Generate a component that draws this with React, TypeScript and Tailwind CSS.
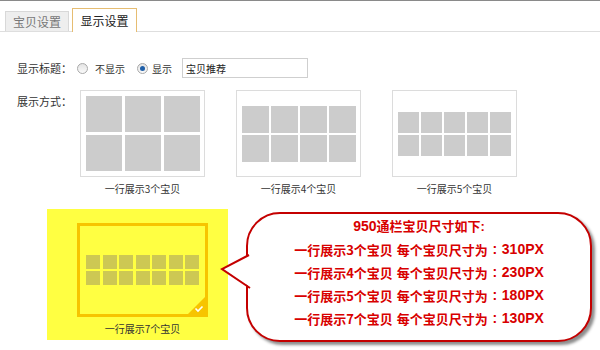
import React from "react";

const font = { fontFamily: '"Noto Sans CJK SC", "Liberation Sans", sans-serif' };
const latin = { fontFamily: '"Liberation Sans", "Noto Sans CJK SC", sans-serif' };

function Cells({ cols, size, gap, color }: { cols: number; size: number; gap: number; color: string }) {
  const items = Array.from({ length: cols * 2 });
  return (
    <div
      className="grid"
      style={{ gridTemplateColumns: `repeat(${cols}, ${size}px)`, gridAutoRows: `${size}px`, gap: `${gap}px` }}
    >
      {items.map((_, i) => (
        <div key={i} style={{ background: color }} />
      ))}
    </div>
  );
}

function Layout({ cols, size, gap, caption }: { cols: number; size: number; gap: number; caption: string }) {
  return (
    <div className="flex w-[125px] flex-col items-center">
      <div className="flex h-[87px] w-[125px] items-center justify-center border border-[#dcdcdc] bg-white">
        <Cells cols={cols} size={size} gap={gap} color="#cccccc" />
      </div>
      <div className="mt-[5px] text-[10px] leading-[13px] text-[#333]">{caption}</div>
    </div>
  );
}

function Radio({ checked }: { checked?: boolean }) {
  return (
    <span className="relative inline-flex h-[11px] w-[11px] items-center justify-center rounded-full border border-[#a9a9a9] bg-gradient-to-b from-[#e4e4e4] to-[#fafafa]">
      {checked && <span className="h-[5px] w-[5px] rounded-full bg-[#1f5fa8]" />}
    </span>
  );
}

const lines = [
  ["一行展示3个宝贝", "310PX"],
  ["一行展示4个宝贝", "230PX"],
  ["一行展示5个宝贝", "180PX"],
  ["一行展示7个宝贝", "130PX"],
];

export default function App() {
  return (
    <div className="relative h-[350px] w-[600px] overflow-hidden bg-white text-[#333]" style={font}>
      <div className="h-px bg-[#8a8a8a]" />
      <div className="flex h-[31px] items-end gap-[3px] border-b border-[#dedede] pl-[5px]">
        <div className="flex h-[20px] w-[64px] items-center justify-center border border-b-0 border-[#d8d8d8] bg-[#eeeeee] text-[12px] text-[#777]">
          宝贝设置
        </div>
        <div className="relative -mb-px flex h-[24px] w-[65px] items-center justify-center border border-b-0 border-[#e6bd72] bg-white text-[12px] text-[#222]">
          显示设置
        </div>
      </div>

      <div className="pl-[17px]">
        <div className="mt-[26px] flex h-[20px] items-center text-[11px] text-[#333]">
          <span className="w-[60px]">显示标题：</span>
          <Radio />
          <span className="ml-[7px] text-[10px]">不显示</span>
          <span className="ml-[12px] flex items-center">
            <Radio checked />
          </span>
          <span className="ml-[4px] text-[10px]">显示</span>
          <div className="ml-[10px] flex h-[20px] w-[126px] items-center border border-[#cfcfcf] pl-[3px] text-[10px] text-[#222]">
            宝贝推荐
          </div>
        </div>

        <div className="mt-[12px] flex">
          <div className="w-[63px] pt-[4px] text-[11px] leading-[15px]">展示方式：</div>
          <div className="flex gap-[31px]">
            <Layout cols={3} size={36} gap={3} caption="一行展示3个宝贝" />
            <Layout cols={4} size={27} gap={2} caption="一行展示4个宝贝" />
            <Layout cols={5} size={21} gap={2} caption="一行展示5个宝贝" />
          </div>
        </div>

        <div className="mt-[14px] ml-[30px] flex items-start">
          <div className="flex h-[131px] w-[181px] flex-col items-start bg-[#ffff42] pl-[30px] pt-[14px]">
            <div className="relative flex h-[94px] w-[131px] items-center justify-center border-[3px] border-[#f7c400]">
              <Cells cols={7} size={14} gap={2.5} color="#cdc853" />
              <svg className="absolute bottom-0 right-0" width="17" height="17" viewBox="0 0 17 17">
                <polygon points="17,0 17,17 0,17" fill="#f7c400" />
                <path d="M7.5 11.5 L10 14 L14.5 9.5" stroke="#fff" strokeWidth="1.6" fill="none" />
              </svg>
            </div>
            <div className="mt-[5px] w-[131px] text-center text-[10px] leading-[13px] text-[#333]">一行展示7个宝贝</div>
          </div>

          <div className="relative ml-[18px] mt-[3px] flex h-[130px] w-[346px] flex-col items-center rounded-[34px] border-2 border-[#c40000] bg-white shadow-[3px_3px_3px_rgba(0,0,0,0.45)]">
            <svg className="absolute left-[-28px] top-[40px]" width="32" height="36" viewBox="0 0 32 36">
              <polygon points="30,1 2,15 30,33" fill="#fff" />
              <polyline points="29,1 2,15 30,34" fill="none" stroke="#c40000" strokeWidth="2" />
            </svg>
            <div className="text-[13px] font-bold leading-[23px] text-[#d80000]">
              <span className="text-[14px]" style={latin}>950</span>通栏宝贝尺寸如下<span style={latin}>:</span>
            </div>
            {lines.map(([a, b]) => (
              <div key={a} className="flex items-center text-[13px] font-bold leading-[23px] text-[#d80000]">
                <span>{a}</span>
                <span className="ml-[4px]">每个宝贝尺寸为</span>
                <span className="inline-block w-[14px] text-center text-[14px]" style={latin}>:</span>
                <span className="text-[14px]" style={latin}>{b}</span>
              </div>
            ))}
          </div>
        </div>
      </div>
    </div>
  );
}
